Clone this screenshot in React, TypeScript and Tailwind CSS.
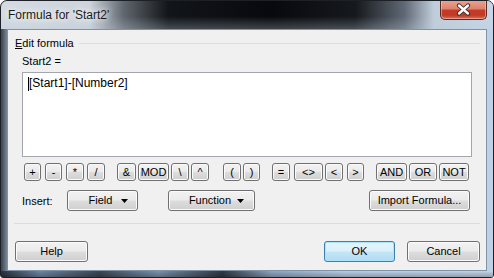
const font = "font-['Liberation_Sans',Arial,sans-serif]";

const btn =
  "h-full flex items-center justify-center rounded-[3px] border border-[#707070] bg-[linear-gradient(to_bottom,#f2f2f2_0%,#ebebeb_48%,#dddddd_52%,#cfcfcf_100%)] shadow-[inset_0_0_0_1px_#fbfbfb] text-[11px] leading-none text-black";

const ops = [
  { label: "+", cls: "ml-[16px] w-[17px]" },
  { label: "-", cls: "ml-[4px] w-[17px]" },
  { label: "*", cls: "ml-[4px] w-[18px]" },
  { label: "/", cls: "ml-[3px] w-[18px]" },
  { label: "&", cls: "ml-[12px] w-[19px]" },
  { label: "MOD", cls: "ml-[2px] w-[31px]" },
  { label: "\\", cls: "ml-[2px] w-[18px]" },
  { label: "^", cls: "ml-[2px] w-[18px]" },
  { label: "(", cls: "ml-[14px] w-[18px]" },
  { label: ")", cls: "ml-[2px] w-[17px]" },
  { label: "=", cls: "ml-[12px] w-[18px]" },
  { label: "<>", cls: "ml-[4px] w-[29px]" },
  { label: "<", cls: "ml-[2px] w-[18px]" },
  { label: ">", cls: "ml-[4px] w-[17px]" },
  { label: "AND", cls: "ml-[12px] w-[31px]" },
  { label: "OR", cls: "ml-[2px] w-[28px]" },
  { label: "NOT", cls: "ml-[2px] w-[30px]" },
];

function Arrow() {
  return (
    <svg width="7" height="4" viewBox="0 0 7 4" className="mt-[1px]">
      <path d="M0 0h7L3.5 4z" fill="#000" />
    </svg>
  );
}

function CloseButton() {
  return (
    <div className="ml-auto mr-[6px] -mt-[1px] flex h-[20px] w-[47px] items-center justify-center rounded-b-[5px] border border-t-0 border-[#5a2a22] bg-[linear-gradient(to_bottom,#eaa492_0%,#dc8470_45%,#c63b26_55%,#bf3a24_80%,#d8705a_100%)] shadow-[inset_0_0_0_1px_rgba(255,210,200,0.5)]">
      <svg width="15" height="13" viewBox="0 0 15 13">
        <path d="M3 2.5l9 8M12 2.5l-9 8" stroke="#3b2622" strokeWidth="4.2" strokeLinecap="round" />
        <path d="M3 2.5l9 8M12 2.5l-9 8" stroke="#fff" strokeWidth="2.4" strokeLinecap="round" />
      </svg>
    </div>
  );
}

export default function App() {
  return (
    <div
      className={`${font} flex h-[278px] w-[494px] flex-col overflow-hidden rounded-t-[7px] rounded-b-[3px] border border-[#1d2127] bg-[linear-gradient(to_right,#3a424c_0%,#7f90a2_1.4%,#b6c8da_40%,#bed1e5_100%)]`}
    >
      {/* Title bar */}
      <div className="flex h-[28px] shrink-0 items-start bg-[linear-gradient(to_bottom,rgba(0,0,0,0)_55%,rgba(190,205,220,0.3)_100%),linear-gradient(to_right,#d3dae1_0%,#cdd4db_18%,#60666d_25%,#121519_34%,#08090c_55%,#16191d_72%,#5f6874_82%,#c0cdda_88%,#c6d6e7_100%)]">
        <span className="pl-[7px] pt-[7px] text-[12px] leading-[14px] text-[#1a1a1a] [text-shadow:0_0_6px_#fff,0_0_10px_#fff]">
          Formula for 'Start2'
        </span>
        <CloseButton />
      </div>

      {/* Client area */}
      <div className="mx-[6px] flex h-[242px] shrink-0 flex-col border border-[#7f93a8] bg-[#f0f0f0] text-[11px] leading-[14px] text-black">
        {/* Group header */}
        <div className="mt-[6px] flex items-center pl-[7px] pr-[6px]">
          <span>
            <span className="underline underline-offset-[1px]">E</span>dit formula
          </span>
          <div className="ml-[5px] h-px flex-1 bg-[#d5dfe5]" />
        </div>

        <div className="mt-[4px] pl-[14px]">Start2 =</div>

        {/* Formula box */}
        <div className="ml-[14px] mt-[4px] h-[85px] w-[450px] border border-[#a3a7ad] bg-white px-[5px] pt-[3px]">
          <div className="flex items-center text-[12px] leading-[15px]">
            <span className="h-[14px] w-px bg-black" />
            <span>[Start1]-[Number2]</span>
          </div>
        </div>

        {/* Operators */}
        <div className="mt-[6px] flex h-[18px]">
          {ops.map((op) => (
            <button key={op.label} className={`${btn} ${op.cls}`}>
              {op.label}
            </button>
          ))}
        </div>

        {/* Insert row */}
        <div className="mt-[9px] flex h-[21px] items-center">
          <span className="ml-[14px] w-[45px]">Insert:</span>
          <button className={`${btn} w-[71px] gap-[9px] pl-[12px]`}>
            <span>Field</span>
            <Arrow />
          </button>
          <button className={`${btn} ml-[30px] w-[87px] gap-[6px] pl-[10px]`}>
            <span>Function</span>
            <Arrow />
          </button>
          <button className={`${btn} ml-auto mr-[16px] w-[101px]`}>
            Import Formula...
          </button>
        </div>

        {/* Separator */}
        <div className="mx-[6px] mt-[12px] h-px bg-[#d5dfe5]" />

        {/* Dialog buttons */}
        <div className="mt-[17px] flex h-[21px]">
          <button className={`${btn} ml-[7px] w-[73px]`}>Help</button>
          <button className="ml-auto flex h-full w-[71px] items-center justify-center rounded-[3px] border border-[#3c7fb1] bg-[linear-gradient(to_bottom,#e5f4fc_0%,#dcf0fb_48%,#c4e5f6_52%,#b1dbf2_100%)] shadow-[inset_0_0_0_1px_#a9e5fb] text-[11px] leading-none text-black">
            OK
          </button>
          <button className={`${btn} ml-[12px] mr-[6px] w-[73px]`}>Cancel</button>
        </div>
      </div>

      {/* Bottom frame */}
      <div className="flex-1 bg-[linear-gradient(to_bottom,rgba(0,0,0,0)_0%,rgba(0,0,0,0.25)_100%),linear-gradient(to_right,#2b323b_0%,#6d87a3_8%,#3c4754_20%,#7a93ad_32%,#2f3843_45%,#8da6c0_55%,#b9cde2_70%,#c2d4e8_100%)]" />
    </div>
  );
}
